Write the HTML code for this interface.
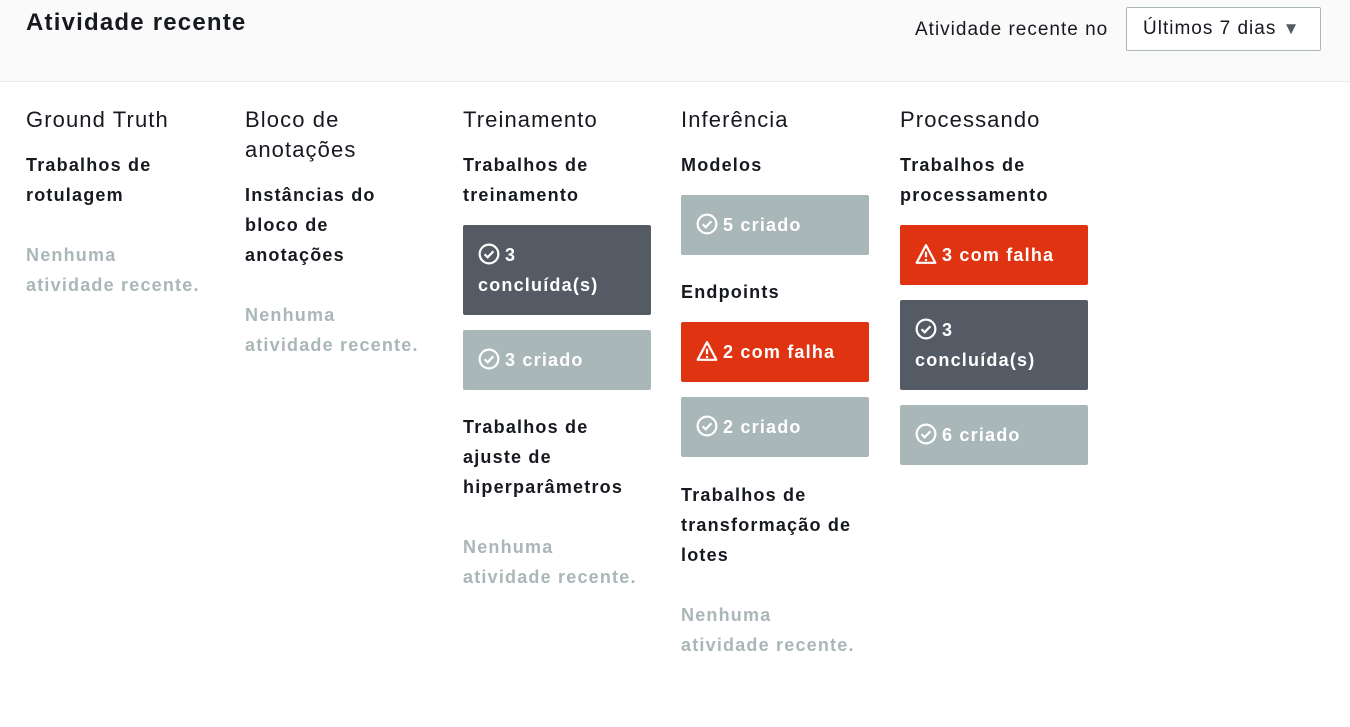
<!DOCTYPE html>
<html><head><meta charset="utf-8"><style>
body{margin:0;width:1350px;height:727px;background:#fff;font-family:"Liberation Sans",sans-serif;position:relative;overflow:hidden;color:#16191f}
.hdr{position:absolute;left:0;top:0;width:1350px;height:81px;background:#fafafa;border-bottom:1px solid #eaeded}
.t{position:absolute;line-height:30px;font-size:18px;font-weight:bold;white-space:nowrap;letter-spacing:1.2px}
.h{position:absolute;line-height:30px;font-size:22px;color:#16191f;letter-spacing:1.1px}
.e{color:#aab7b8}
.c{position:absolute;width:188px;border-radius:2px;color:#fff;font-size:18px;font-weight:bold;line-height:30px;box-sizing:border-box;padding:0 15px;letter-spacing:1.2px}
.d{background:#545b64}.g{background:#aab7b8}.r{background:#df3312}
svg{vertical-align:-4px;margin-right:5px}
</style></head><body>
<div class="hdr"></div>
<div style="position:absolute;left:26px;top:7px;font-size:24px;font-weight:bold;line-height:32px;letter-spacing:1.2px">Atividade recente</div>
<div style="position:absolute;left:915px;top:15px;font-size:19px;line-height:30px;letter-spacing:1px">Atividade recente no</div>
<div style="position:absolute;left:1126px;top:7px;width:195px;height:44px;border:1px solid #aab7b8;border-radius:2px;background:#fff;box-sizing:border-box;font-size:19px;line-height:42px;padding-left:16px;letter-spacing:1px">Últimos 7 dias <span style="font-size:17px;color:#545b64;letter-spacing:0">▼</span></div>

<svg width="0" height="0" style="position:absolute"><defs>
<symbol id="ok" viewBox="0 0 20 20"><circle cx="10" cy="10" r="8.5" fill="none" stroke="#fff" stroke-width="2"/><path d="M6 10.2l2.8 2.8 5.2-5.5" fill="none" stroke="#fff" stroke-width="2"/></symbol>
<symbol id="wa" viewBox="0 0 20 20"><path d="M10 2L1.5 18h17z" fill="none" stroke="#fff" stroke-width="2" stroke-linejoin="round"/><path d="M10 8v5M10 14.5v2" stroke="#fff" stroke-width="2"/></symbol>
</defs></svg>

<div class="h" style="left:26px;top:105px">Ground Truth</div>
<div class="t" style="left:26px;top:150px">Trabalhos de<br>rotulagem</div>
<div class="t e" style="left:26px;top:240px">Nenhuma<br>atividade recente.</div>

<div class="h" style="left:245px;top:105px">Bloco de<br>anotações</div>
<div class="t" style="left:245px;top:180px">Instâncias do<br>bloco de<br>anotações</div>
<div class="t e" style="left:245px;top:300px">Nenhuma<br>atividade recente.</div>

<div class="h" style="left:463px;top:105px">Treinamento</div>
<div class="t" style="left:463px;top:150px">Trabalhos de<br>treinamento</div>
<div class="c d" style="left:463px;top:225px;padding-top:15px;height:90px"><svg width="22" height="22"><use href="#ok"/></svg>3<br>concluída(s)</div>
<div class="c g" style="left:463px;top:330px;height:60px;padding-top:15px"><svg width="22" height="22"><use href="#ok"/></svg>3 criado</div>
<div class="t" style="left:463px;top:412px">Trabalhos de<br>ajuste de<br>hiperparâmetros</div>
<div class="t e" style="left:463px;top:532px">Nenhuma<br>atividade recente.</div>

<div class="h" style="left:681px;top:105px">Inferência</div>
<div class="t" style="left:681px;top:150px">Modelos</div>
<div class="c g" style="left:681px;top:195px;height:60px;padding-top:15px"><svg width="22" height="22"><use href="#ok"/></svg>5 criado</div>
<div class="t" style="left:681px;top:277px">Endpoints</div>
<div class="c r" style="left:681px;top:322px;height:60px;padding-top:15px"><svg width="22" height="22"><use href="#wa"/></svg>2 com falha</div>
<div class="c g" style="left:681px;top:397px;height:60px;padding-top:15px"><svg width="22" height="22"><use href="#ok"/></svg>2 criado</div>
<div class="t" style="left:681px;top:480px">Trabalhos de<br>transformação de<br>lotes</div>
<div class="t e" style="left:681px;top:600px">Nenhuma<br>atividade recente.</div>

<div class="h" style="left:900px;top:105px">Processando</div>
<div class="t" style="left:900px;top:150px">Trabalhos de<br>processamento</div>
<div class="c r" style="left:900px;top:225px;height:60px;padding-top:15px"><svg width="22" height="22"><use href="#wa"/></svg>3 com falha</div>
<div class="c d" style="left:900px;top:300px;padding-top:15px;height:90px"><svg width="22" height="22"><use href="#ok"/></svg>3<br>concluída(s)</div>
<div class="c g" style="left:900px;top:405px;height:60px;padding-top:15px"><svg width="22" height="22"><use href="#ok"/></svg>6 criado</div>
</body></html>
